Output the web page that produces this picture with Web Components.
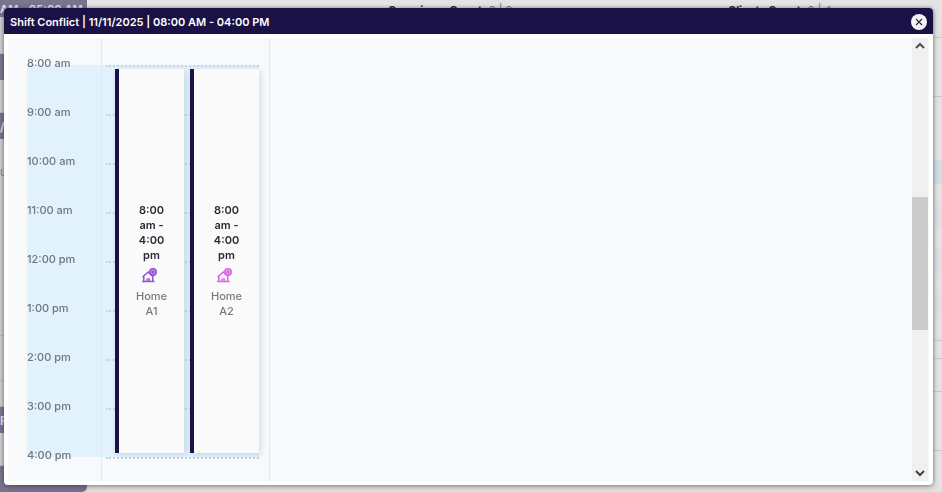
<!DOCTYPE html>
<html lang="en">
<head>
<meta charset="utf-8">
<title>Shift Conflict</title>
<style>
html, body { height: 100%; }
body { margin: 0; overflow: hidden; background: #e3e3e3; font-family: Inter, "Liberation Sans", sans-serif; font-size: 11px; color: #1f2028; }
</style>
</head>
<body>
<schedule-backdrop></schedule-backdrop>
<conflict-dialog>
  <span slot="title">Shift Conflict | 11/11/2025 | 08:00 AM - 04:00 PM</span>
  <scroll-panel>
    <day-timeline>
      <shift-card place="Home A1" color="#9350d6">8:00 am - 4:00 pm</shift-card>
      <shift-card place="Home A2" color="#da62e6">8:00 am - 4:00 pm</shift-card>
    </day-timeline>
  </scroll-panel>
</conflict-dialog>

<script>
const define = (name, markup, setup) => {
  const template = document.createElement('template');
  template.innerHTML = markup;
  customElements.define(name, class extends HTMLElement {
    connectedCallback() {
      if (this.shadowRoot) return;
      this.attachShadow({ mode: 'open' }).append(template.content.cloneNode(true));
      if (setup) setup(this, this.shadowRoot);
    }
  });
};

/* Dimmed schedule page behind the dialog */
define('schedule-backdrop', `
<style>
:host { display: grid; grid-template-columns: 87px 1fr 40px; height: 100vh; overflow: hidden; background: #e3e3e3; }
.left { display: flex; flex-direction: column; background: linear-gradient(90deg, #d0cfd1 4px, #e3e3e3 4px); }
.chip { background: #7b748f; color: #e4e1ea; font-weight: 700; font-size: 12px; line-height: 15px; white-space: nowrap; overflow: hidden; height: 26px; box-sizing: border-box; padding-top: 6px; }
.chip.first { height: 17px; padding-top: 2px; font-size: 11px; }
.chip.last { border-radius: 0 0 5px 0; }
.cell { border-bottom: 1px solid #bcbcbe; box-sizing: border-box; color: #85858a; }
.mid { display: flex; flex-direction: column; justify-content: space-between; }
.counts { display: grid; grid-template-columns: 301px 340px 1fr; line-height: 16px; }
.counts p { margin: 0; grid-row: 1; white-space: nowrap; padding-top: 2px; }
.counts p:first-child { grid-column: 2; }
.counts p:last-child { grid-column: 3; }
.counts span { color: #77777c; }
.right { display: flex; flex-direction: column; }
.right i { box-sizing: border-box; border-bottom: 1px solid #c9c9cb; }
.right i.plain { border: 0; }
</style>
<div class="left">
  <div class="chip first">AM - 05:00 AM</div>
  <div class="cell" style="height:37px"></div>
  <div class="chip"></div>
  <div class="cell" style="height:33px"></div>
  <div class="chip">/</div>
  <div class="cell" style="height:197px;padding-top:26px">u</div>
  <div class="cell" style="height:45px"></div>
  <div class="cell" style="height:26px"></div>
  <div class="chip">F</div>
  <div class="cell" style="height:33px"></div>
  <div class="chip last"></div>
</div>
<div class="mid">
  <div class="counts"><p><b>Caregivers Count:</b> <span>0 | 2</span></p><p><b>Clients Count:</b> <span>0 | 4</span></p></div>
</div>
<div class="right">
  <i style="height:38px"></i>
  <i style="height:59px"></i>
  <i class="plain" style="height:63px"></i>
  <i class="plain" style="height:24px;background:#d3dde5"></i>
  <i class="plain" style="height:22px"></i>
  <i class="plain" style="height:22px;background:#dfdfe4"></i>
  <i class="plain" style="height:20px"></i>
  <i class="plain" style="height:26px;background:#dfdfe4"></i>
  <i class="plain" style="height:20px"></i>
  <i class="plain" style="height:24px;background:#dfdfe4"></i>
  <i style="height:23px"></i>
  <i style="height:18px"></i>
  <i style="height:33px"></i>
  <i style="height:59px"></i>
</div>`);

define('conflict-dialog', `
<style>
:host { position: fixed; inset: 8px 9px 7px 4px; display: flex; flex-direction: column; background: #fff; border-radius: 4px; box-shadow: 0 0 3px 1px rgba(70,70,80,.35), 0 2px 6px rgba(0,0,0,.25); overflow: hidden; }
header { display: flex; align-items: center; justify-content: space-between; height: 26px; padding: 2px 6px 0; box-sizing: border-box; background: #1a1147; color: #fff; }
h1 { margin: 0; font-size: 11px; line-height: 16px; font-weight: 600; white-space: nowrap; }
button { display: grid; place-items: center; width: 16px; height: 16px; padding: 0; border: 0; border-radius: 50%; background: #f3f2f7; }
.body { flex: 1; min-height: 0; padding: 4px; display: flex; }
::slotted(scroll-panel) { flex: 1; }
</style>
<header><h1><slot name="title"></slot></h1>
<button type="button" aria-label="Close"><svg width="8" height="8" viewBox="0 0 8 8" fill="none" stroke="#292342" stroke-width="1.1"><path d="M1 1l6 6M7 1L1 7"/></svg></button></header>
<div class="body"><slot></slot></div>`);

define('scroll-panel', `
<style>
:host { display: flex; min-width: 0; background: #f8f9fb; }
.view { flex: 1; min-width: 0; overflow: hidden; }
.bar { width: 16px; margin-right: 1px; display: flex; flex-direction: column; background: #f0f0f0; }
button { height: 16px; padding: 0; border: 0; background: none; display: grid; place-items: center; }
.track { flex: 1; display: grid; grid-template-rows: 143fr 132fr 135fr; }
.thumb { grid-row: 2; background: #cbcbcb; }
</style>
<div class="view"><slot></slot></div>
<div class="bar">
  <button type="button" aria-label="Scroll up"><svg width="10" height="8" viewBox="0 0 10 8" fill="none" stroke="#505050" stroke-width="2"><path d="M1 6l4-4 4 4"/></svg></button>
  <div class="track"><div class="thumb"></div></div>
  <button type="button" aria-label="Scroll down"><svg width="10" height="8" viewBox="0 0 10 8" fill="none" stroke="#404040" stroke-width="2"><path d="M1 2l4 4 4-4"/></svg></button>
</div>`);

define('day-timeline', `
<style>
:host { display: grid; grid-template-columns: 94px 168px; height: 100%; box-sizing: border-box; }
.hours, .day { padding-top: 27px; border-right: 1px solid #e5e8ec; box-sizing: border-box; }
.hours { padding-left: 19px; }
ol { list-style: none; margin: 0; padding: 0; height: 392px; background: #e1f2fd; color: #6b7683; font-weight: 500; display: grid; grid-auto-rows: 49px; }
li { line-height: 16px; margin-top: -10px; }
.lane { height: 394px; margin-right: 10px; display: grid; grid-template-rows: 394px; background: linear-gradient(#e1f2fd, #e1f2fd) 0 0 / 100% 392px no-repeat; }
.lines, .cards { grid-area: 1 / 1; }
.lines { display: grid; grid-auto-rows: 49px; margin-left: 4px; }
.lines i { border-top: 2px dotted #c3d5e3; }
.cards { display: grid; grid-template-columns: 1fr 1fr; gap: 6px; padding: 4px 0 6px 13px; }
</style>
<div class="hours"><ol></ol></div>
<div class="day"><div class="lane"><div class="lines"></div><div class="cards"><slot></slot></div></div></div>`,
(host, root) => {
  const hours = ['8:00 am', '9:00 am', '10:00 am', '11:00 am', '12:00 pm', '1:00 pm', '2:00 pm', '3:00 pm', '4:00 pm'];
  for (const hour of hours) {
    const item = document.createElement('li');
    item.textContent = hour;
    root.querySelector('ol').append(item);
    root.querySelector('.lines').append(document.createElement('i'));
  }
});

define('shift-card', `
<style>
:host { display: flex; flex-direction: column; align-items: center; justify-content: center; box-sizing: border-box; padding: 0 16px; border-left: 4px solid #1a1147; background: #fafafa; box-shadow: 2px 2px 6px rgba(90,110,120,.2); text-align: center; line-height: 15px; }
.time { font-weight: 600; color: #2b2b36; width: 30px; }
svg { margin: 5px 4px 6px 0; }
.place { font-weight: 500; color: #777982; width: 32px; }
</style>
<div class="time"><slot></slot></div>
<svg width="15" height="15" viewBox="0 0 15 15" fill="none" stroke="currentColor" stroke-width="1.5"><path d="M0 13.6h12.5M1.8 13.5V8.2M10.7 13.5V9M.5 9L6.3 4l5 5"/><path d="M4.8 13.5v-2.7h2.9v2.7z" fill="currentColor" fill-opacity=".6" stroke-width=".8"/><circle cx="11" cy="4" r="3.2" fill="currentColor" fill-opacity=".55"/><circle cx="11" cy="4" r=".8"/></svg>
<div class="place"></div>`,
(host, root) => {
  root.querySelector('svg').style.color = host.getAttribute('color');
  root.querySelector('.place').textContent = host.getAttribute('place');
});
</script>
</body>
</html>
